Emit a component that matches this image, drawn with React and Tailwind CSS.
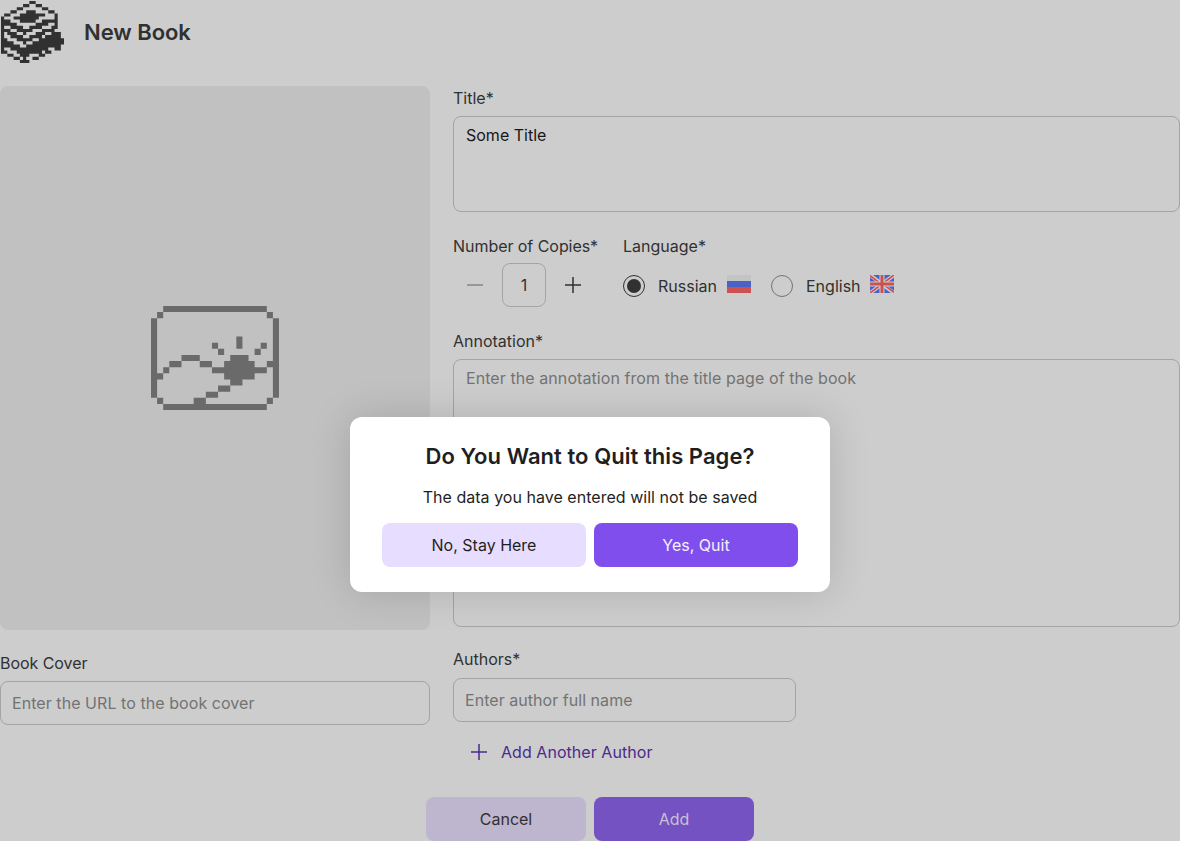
import React from 'react';

const LOGO = [
  '.........##.........',
  '.......##..##.......',
  '.....##......##.....',
  '...##...###....##...',
  '.##...########...#..',
  '#...########.....#..',
  '###...#####..#####..',
  '#####......####..#..',
  '#..####..####...##..',
  '###..#####...####...',
  '#.###..#...###..###.',
  '#..####..####.#####.',
  '##...#####..########',
  '####...#..##########',
  '######..###########.',
  '#..############..##.',
  '##...########.##....',
  '..##..###...##......',
  '....##.#..##........',
  '......###...........',
];

const COVER = [
  '..#################..',
  '.#.................#.',
  '#...................#',
  '#...................#',
  '#...................#',
  '#.............#.....#',
  '#.........#...#...#.#',
  '#..........#.....#..#',
  '#....###.....###....#',
  '#..##...##..#####..##',
  '#.#.......#########.#',
  '##..........#####...#',
  '#............##.....#',
  '#..........##.......#',
  '#........##.........#',
  '.#.....##..........#.',
  '..#################..',
];

function PixelArt({ rows, className }) {
  return (
    <svg
      className={className}
      viewBox={`0 0 ${rows[0].length} ${rows.length}`}
      preserveAspectRatio="none"
      fill="currentColor"
      aria-hidden="true"
    >
      <path d={rows
        .flatMap((row, y) =>
          [...row.matchAll(/#+/g)].map((m) => `M${m.index} ${y}h${m[0].length}v1h-${m[0].length}z`)
        )
        .join('')} />
    </svg>
  );
}

function Plus({ className }) {
  return (
    <svg className={className} viewBox="0 0 16 16" fill="none" stroke="currentColor" strokeWidth="1.5" aria-hidden="true">
      <path d="M0 8h16M8 0v16" />
    </svg>
  );
}

function RussianFlag() {
  return (
    <svg className="h-[18px] w-6" viewBox="0 0 24 18" aria-hidden="true">
      <path fill="#c4c4c4" d="M0 0h24v6H0z" />
      <path fill="#4862c8" d="M0 6h24v6H0z" />
      <path fill="#ce5050" d="M0 12h24v6H0z" />
    </svg>
  );
}

function BritishFlag() {
  return (
    <svg className="h-[18px] w-6" viewBox="0 0 24 18" aria-hidden="true">
      <path fill="#4862c8" d="M0 0h24v18H0z" />
      <path stroke="#cdcdcd" strokeWidth="3.8" d="M0 0l24 18M24 0L0 18" />
      <path stroke="#ce5050" strokeWidth="1.6" d="M0 .7l12 9M24 17.3l-12-9M24 0L12 9M0 18l12-9" />
      <path stroke="#cdcdcd" strokeWidth="5" d="M12 0v18M0 9h24" />
      <path stroke="#ce5050" strokeWidth="3" d="M12 0v18M0 9h24" />
    </svg>
  );
}

function ConfirmDialog() {
  return (
    <div className="absolute inset-0 flex justify-center pt-[417px]">
      <div
        role="dialog"
        className="flex h-[175px] w-[480px] flex-col items-center rounded-xl bg-white px-8 pt-6 text-[#1f1f1f] shadow-[0_0_40px_rgba(0,0,0,0.15)]"
      >
        <h2 className="text-[22px] leading-[30px] font-semibold tracking-[0.05px]">Do You Want to Quit this Page?</h2>
        <p className="mt-[14px] leading-6 tracking-[0.03px]">The data you have entered will not be saved</p>
        <div className="mt-[14px] flex w-full gap-2">
          <button className="h-11 flex-1 rounded-lg bg-[#e7ddff]">No, Stay Here</button>
          <button className="h-11 flex-1 rounded-lg bg-[#804eec] text-[#f5f0ff]">Yes, Quit</button>
        </div>
      </div>
    </div>
  );
}

export default function App() {
  return (
    <div className="relative h-[841px] w-[1180px] overflow-hidden bg-[#cdcdcd] font-['Inter',sans-serif] text-base leading-6 text-[#313131]">
      <header className="flex h-16 items-center">
        <PixelArt rows={LOGO} className="ml-px h-[62px] w-[63px]" />
        <h1 className="ml-5 text-[22px] leading-[30px] font-semibold tracking-[-0.05px]">New Book</h1>
      </header>

      <main className="mt-[22px] flex gap-[23px]">
        <section className="flex w-[430px] flex-col">
          <div className="flex h-[544px] items-center justify-center rounded-lg bg-[#c1c1c1]">
            <PixelArt rows={COVER} className="h-[104px] w-32 text-[#6a6a6a]" />
          </div>
          <label className="mt-[21px] tracking-[-0.05px]">Book Cover</label>
          <div className="mt-[6px] flex h-11 items-center rounded-lg border border-[#a4a4a4] px-[11px] tracking-[0.06px] text-[#737373]">
            Enter the URL to the book cover
          </div>
        </section>

        <section className="flex flex-1 flex-col">
          <label>Title*</label>
          <div className="mt-[6px] h-24 rounded-lg border border-[#a4a4a4] px-3 pt-[6px] text-[#181818]">Some Title</div>

          <div className="mt-[22px] flex">
            <div className="w-[170px]">
              <div className="tracking-[-0.05px] whitespace-nowrap">Number of Copies*</div>
              <div className="mt-[5px] flex items-center">
                <svg className="ml-[14px] h-4 w-4 text-[#858585]" viewBox="0 0 16 16" stroke="currentColor" strokeWidth="1.5" aria-hidden="true">
                  <path d="M0 8h16" />
                </svg>
                <div className="ml-[19px] flex h-11 w-11 items-center justify-center rounded-lg border border-[#a4a4a4]">1</div>
                <Plus className="ml-[19px] h-4 w-4" />
              </div>
            </div>
            <div>
              <div>Language*</div>
              <div className="mt-4 flex h-6 items-center">
                <span className="flex size-[22px] items-center justify-center rounded-full border border-[#313131]">
                  <span className="size-[14px] rounded-full bg-[#313131]" />
                </span>
                <span className="ml-[13px] w-[69px]">Russian</span>
                <span className="pb-1">
                  <RussianFlag />
                </span>
                <span className="ml-5 size-[22px] rounded-full border border-[#747474]" />
                <span className="ml-[13px] w-16">English</span>
                <span className="pb-1">
                  <BritishFlag />
                </span>
              </div>
            </div>
          </div>

          <label className="mt-[22px]">Annotation*</label>
          <div className="mt-[6px] h-[268px] rounded-lg border border-[#a4a4a4] px-3 pt-[6px] tracking-[0.075px] text-[#737373]">
            Enter the annotation from the title page of the book
          </div>

          <label className="mt-5">Authors*</label>
          <div className="mt-[7px] flex h-11 w-[343px] items-center rounded-lg border border-[#a4a4a4] px-[11px] tracking-[0.04px] text-[#737373]">
            Enter author full name
          </div>
          <div className="mt-[18px] ml-[18px] flex items-center gap-[14px] tracking-[0.05px] text-[#4a2a8c]">
            <Plus className="h-4 w-4" />
            Add Another Author
          </div>
        </section>
      </main>

      <footer className="mt-[33px] flex justify-center gap-2">
        <button className="h-11 w-40 rounded-lg bg-[#beb5ce]">Cancel</button>
        <button className="h-11 w-40 rounded-lg bg-[#7552c2] text-[#c6c0d4]">Add</button>
      </footer>

      <ConfirmDialog />
    </div>
  );
}
